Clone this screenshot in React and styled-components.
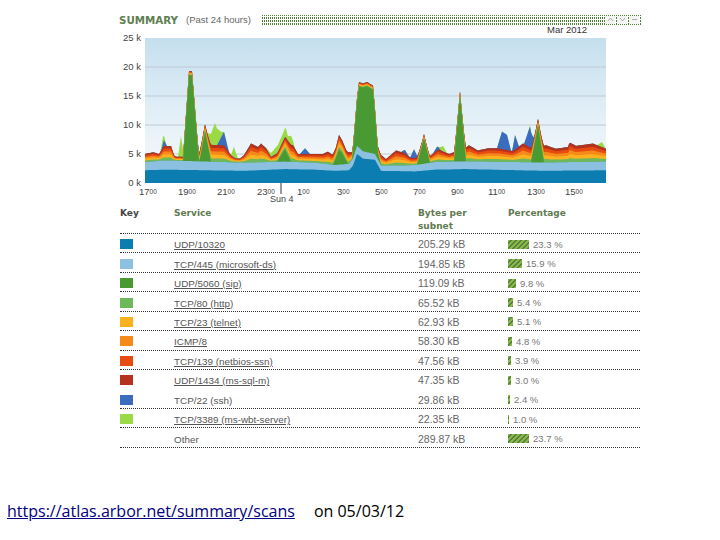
import styled, { createGlobalStyle } from 'styled-components';

const GlobalStyle = createGlobalStyle`
  html, body {
    margin: 0;
    padding: 0;
    background: #fff;
  }
`;

const Page = styled.div`
  width: 720px;
  height: 540px;
  overflow: hidden;
  display: flex;
  flex-direction: column;
  font-family: "Liberation Sans", Arial, sans-serif;
`;

const Report = styled.div`
  width: 523px;
  margin-left: 119px;
  padding-top: 14px;
`;

const TitleBar = styled.div`
  display: flex;
  align-items: center;
  height: 11px;
`;

const Title = styled.span`
  font-family: "DejaVu Sans", sans-serif;
  font-size: 10.3px;
  font-weight: 700;
  color: #5f8052;
  width: 67px;
`;

const Period = styled.span`
  font-size: 9.5px;
  color: #666;
  width: 76px;
`;

const Strip = styled.div`
  flex: 1;
  height: 10px;
  display: flex;
  justify-content: flex-end;
  background-image:
    repeating-linear-gradient(90deg, #4f8035 0 1px, #fff 1px 2px),
    repeating-linear-gradient(0deg, #4f8035 0 2px, #fff 2px 3px);
  background-blend-mode: lighten;
`;

const StripButtons = styled.div`
  display: flex;
  align-items: center;
  gap: 2px;
  padding-right: 3px;
`;

const StripButton = styled.div`
  width: 10px;
  height: 8px;
  background: #f4f5f2;
  display: flex;
  align-items: center;
  justify-content: center;
`;

const Chart = styled.svg`
  display: block;
  width: 523px;
  height: 184px;
  margin-top: -3px;
`;

const Table = styled.div`
  margin-top: 1px;
  margin-left: 1px;
  width: 520px;
`;

const Row = styled.div`
  box-sizing: border-box;
  display: grid;
  grid-template-columns: 54px 244px 90px 1fr;
  align-items: center;
  height: ${(p) => (p.$head ? '27px' : '19.45px')};
  padding-top: ${(p) => (p.$head ? '0' : '2px')};
  border-bottom: 1px dotted ${(p) => (p.$noLine ? 'transparent' : '#333')};
  font-size: 10.5px;
  color: #666;
`;

const HeadCell = styled.div`
  align-self: start;
  font-family: "DejaVu Sans", sans-serif;
  font-size: 9px;
  font-weight: 700;
  line-height: 13px;
  color: ${(p) => (p.$dark ? '#444' : '#5f7a50')};
`;

const Swatch = styled.div`
  width: 13px;
  height: 10px;
  background: ${(p) => p.$color};
`;

const ServiceLink = styled.span`
  font-size: 9.9px;
  color: #555;
  text-decoration: ${(p) => (p.$plain ? 'none' : 'underline')};
`;

const Percent = styled.div`
  display: flex;
  align-items: center;
  gap: 4px;
  font-size: 9.5px;
  color: #777;
`;

const Bar = styled.div`
  height: 9px;
  background: repeating-linear-gradient(135deg, #8ab54a 0 2px, #55803a 2px 3.5px);
`;

const Footer = styled.div`
  margin-top: 53px;
  margin-left: 7px;
  display: flex;
  gap: 19px;
  font-family: "Open Sans", sans-serif;
  font-size: 16px;
  line-height: 20px;
`;

const FooterLink = styled.a`
  color: #000080;
  text-decoration: underline;
`;

const FooterDate = styled.span`
  color: #000;
`;

const PLOT_X = 26;
const PLOT_Y = 16;
const PLOT_W = 461;
const PLOT_H = 145;
const K = PLOT_H / 25;

// piecewise linear lookup through [x, value] knots
const lerp = (knots, x) => {
  if (x <= knots[0][0]) return knots[0][1];
  for (let i = 1; i < knots.length; i++) {
    if (x <= knots[i][0]) {
      const [x0, y0] = knots[i - 1];
      const [x1, y1] = knots[i];
      return y0 + ((y1 - y0) * (x - x0)) / (x1 - x0);
    }
  }
  return knots[knots.length - 1][1];
};

const blueKnots = [
  [0, 2.2], [20, 2.3], [60, 2.2], [100, 2.1], [140, 2.4], [170, 2.3], [190, 2.1], [204, 2.2],
  [208, 3], [212, 5], [218, 4.2], [230, 4], [236, 2.1], [270, 2], [290, 2.3], [320, 2.4],
  [400, 2.1], [461, 2.2],
];
const skyKnots = [
  [0, 1.4], [20, 1.6], [100, 1.4], [170, 1.2], [190, 1], [204, 1.1], [212, 1.4], [230, 1],
  [238, 0.9], [260, 1], [290, 1.3], [461, 1.5],
];
const greenKnots = [
  [0, 0], [38, 0], [44, 14.8], [47, 14.8], [54, 0], [54.5, 0], [60, 5.3], [66, 0],
  [132, 0], [140, 2.2], [146, 0], [188, 0], [194, 2.6], [197, 2], [203, 0], [207, 0],
  [214, 10.6], [222, 11.4], [228, 11], [233, 1.2], [236, 0], [272, 0], [279, 4.4], [285, 0],
  [309, 0], [315, 11.4], [321, 0], [386, 0], [393, 6.4], [399, 0], [461, 0],
];
const topKnots = [
  [0, 5], [8, 5.3], [14, 5], [19, 6.4], [26, 6.4], [29, 4.8], [36, 3.9], [53, 5], [64, 6.6],
  [79, 6.5], [86, 4.8], [93, 3.9], [99, 4.8], [106, 6.8], [113, 6.2], [116, 6.8], [121, 6],
  [126, 4.5], [134, 5.3], [141, 6.8], [148, 6.5], [153, 5], [178, 5], [183, 5.4], [187, 4.9],
  [191, 5.3], [194, 7], [201, 5.3], [233, 5.3], [241, 4.1], [251, 5.6], [259, 5.2], [266, 4.3],
  [284, 4.5], [293, 5.8], [304, 5], [319, 5.9], [324, 6.5], [333, 5.6], [343, 6], [353, 6],
  [368, 5.5], [378, 6.8], [388, 5.9], [401, 6.5], [411, 5.9], [423, 6.2], [424.5, 7], [431, 6.4],
  [448, 6.8], [461, 5.9],
];
const royalKnots = [
  [0, 0], [16, 0], [19, 1], [22, 0], [72, 0], [79, 2.3], [84, 0], [155, 0], [160, 1], [165, 0],
  [256, 0], [260, 0.6], [264, 0], [265, 0], [269, 1.5], [273, 0], [288, 0], [292, 0.6], [296, 0],
  [352, 0], [357, 3], [362, 2.6], [366, 0], [367, 0], [370, 2.5], [374, 0], [379, 0], [385, 3.6],
  [389, 0], [461, 0],
];
const limeKnots = [
  [0, 0], [15, 0], [18, 1.2], [21, 0], [33, 0], [36, 3.6], [39, 0], [62, 0], [70, 3.8], [76, 1], [79, 0],
  [86, 0], [89, 1.9], [93, 0], [120, 0], [131, 1.2], [138, 1.4], [141, 1.6], [143, 0.8], [146, 1.6], [150, 0],
  [293, 0], [298, 1], [302, 0], [452, 0], [457, 0.9], [461, 0],
];

const bandLayers = [
  { color: '#6db85a', share: 0.2 },
  { color: '#fdb11e', share: 0.22 },
  { color: '#f58a1b', share: 0.2 },
  { color: '#e64b10', share: 0.2 },
  { color: '#b5321f', share: 0.18 },
];

const samples = [];
for (let x = 0; x <= PLOT_W; x += 1) samples.push(x);

// cumulative top of every layer at each sample, bottom up
const buildLayers = () => {
  const layers = [
    { color: '#0b7db0', tops: [] },
    { color: '#8cc0e0', tops: [] },
    { color: '#4a9a33', tops: [] },
    ...bandLayers.map((b) => ({ color: b.color, tops: [] })),
    { color: '#3a6cc0', tops: [] },
    { color: '#9adb45', tops: [] },
  ];
  samples.forEach((x) => {
    const blue = lerp(blueKnots, x);
    const sky = lerp(skyKnots, x);
    const green = lerp(greenKnots, x);
    const floor = blue + sky;
    const base = Math.max(lerp(topKnots, x) - floor, 0.5);
    const squeeze = green > 0 ? 1 / (1 + green / 5) : 1;
    const band = Math.max(base * squeeze, 0.7);
    let y = blue;
    layers[0].tops.push(y);
    y += sky;
    layers[1].tops.push(y);
    y += green;
    layers[2].tops.push(y);
    bandLayers.forEach((b, i) => {
      y += band * b.share;
      layers[3 + i].tops.push(y);
    });
    y += lerp(royalKnots, x);
    layers[8].tops.push(y);
    y += lerp(limeKnots, x);
    layers[9].tops.push(y);
  });
  return layers;
};

const layers = buildLayers();
const py = (v) => PLOT_H - v * K;

// drawn top layer first so each lower layer covers it
const areaPath = (tops) =>
  `M0 ${PLOT_H} ` + tops.map((t, i) => `L${samples[i]} ${py(t).toFixed(1)}`).join(' ') + ` L${PLOT_W} ${PLOT_H} Z`;

const yLabels = [25, 20, 15, 10, 5, 0];
const xLabels = [
  ['17', 20], ['19', 59], ['21', 98], ['23', 138], ['1', 178], ['3', 218], ['5', 256],
  ['7', 294], ['9', 332], ['11', 369], ['13', 408], ['15', 446],
];

const rows = [
  { color: '#0b7db0', service: 'UDP/10320', bytes: '205.29 kB', pct: '23.3 %', bar: 21 },
  { color: '#8cc0e0', service: 'TCP/445 (microsoft-ds)', bytes: '194.85 kB', pct: '15.9 %', bar: 14 },
  { color: '#4a9a33', service: 'UDP/5060 (sip)', bytes: '119.09 kB', pct: '9.8 %', bar: 8 },
  { color: '#6db85a', service: 'TCP/80 (http)', bytes: '65.52 kB', pct: '5.4 %', bar: 5 },
  { color: '#fdb11e', service: 'TCP/23 (telnet)', bytes: '62.93 kB', pct: '5.1 %', bar: 5 },
  { color: '#f58a1b', service: 'ICMP/8', bytes: '58.30 kB', pct: '4.8 %', bar: 4 },
  { color: '#e64b10', service: 'TCP/139 (netbios-ssn)', bytes: '47.56 kB', pct: '3.9 %', bar: 3 },
  { color: '#b5321f', service: 'UDP/1434 (ms-sql-m)', bytes: '47.35 kB', pct: '3.0 %', bar: 3, noLine: true },
  { color: '#3a6cc0', service: 'TCP/22 (ssh)', bytes: '29.86 kB', pct: '2.4 %', bar: 2, plain: true },
  { color: '#9adb45', service: 'TCP/3389 (ms-wbt-server)', bytes: '22.35 kB', pct: '1.0 %', bar: 1 },
  { service: 'Other', bytes: '289.87 kB', pct: '23.7 %', bar: 21, plain: true },
];

const TrafficChart = () => (
  <Chart viewBox="0 0 523 184">
    <defs>
      <linearGradient id="sky" x1="0" y1="0" x2="0" y2="1">
        <stop offset="0" stopColor="#c5dfee" />
        <stop offset="0.6" stopColor="#e6f1f8" />
        <stop offset="1" stopColor="#f8fbfd" />
      </linearGradient>
    </defs>
    <text x={428} y={11} fontFamily="Liberation Sans" fontSize="9.5" fill="#333">Mar 2012</text>
    <g transform={`translate(${PLOT_X} ${PLOT_Y})`}>
      <rect width={PLOT_W} height={PLOT_H} fill="url(#sky)" />
      {[20, 15, 10, 5].map((v) => (
        <line key={v} x1="0" x2={PLOT_W} y1={py(v)} y2={py(v)} stroke="#bfc8d4" strokeWidth="1" />
      ))}
      {layers.slice().reverse().map((l) => (
        <path key={l.color} d={areaPath(l.tops)} fill={l.color} />
      ))}
      <rect x="135" y={PLOT_H} width="2" height="11" fill="#999" />
    </g>
    {yLabels.map((v) => (
      <text
        key={v}
        x={22}
        y={PLOT_Y + py(v) + 3}
        textAnchor="end"
        fontFamily="Liberation Sans"
        fontSize="9.5"
        fill="#444"
      >
        {v} k
      </text>
    ))}
    {xLabels.map(([h, x]) => (
      <text key={x} x={x} y={173} fontFamily="Liberation Sans" fontSize="9.5" fill="#444">
        {h}
        <tspan fontSize="6.5" dy="-1">00</tspan>
      </text>
    ))}
    <text x={151} y={180} fontFamily="Liberation Sans" fontSize="9" fill="#444">Sun 4</text>
  </Chart>
);

const ChevronUp = () => (
  <svg width="7" height="5" viewBox="0 0 7 5"><path d="M1 4 L3.5 1 L6 4" fill="none" stroke="#aaa" /></svg>
);
const ChevronDown = () => (
  <svg width="7" height="5" viewBox="0 0 7 5"><path d="M1 1 L3.5 4 L6 1" fill="none" stroke="#aaa" /></svg>
);
const Minus = () => (
  <svg width="7" height="5" viewBox="0 0 7 5"><path d="M1 2.5 H6" fill="none" stroke="#aaa" /></svg>
);

const App = () => (
  <Page>
    <GlobalStyle />
    <Report>
      <TitleBar>
        <Title>SUMMARY</Title>
        <Period>(Past 24 hours)</Period>
        <Strip>
          <StripButtons>
            <StripButton><ChevronUp /></StripButton>
            <StripButton><ChevronDown /></StripButton>
            <StripButton><Minus /></StripButton>
          </StripButtons>
        </Strip>
      </TitleBar>
      <TrafficChart />
      <Table>
        <Row $head>
          <HeadCell $dark>Key</HeadCell>
          <HeadCell>Service</HeadCell>
          <HeadCell>Bytes per<br />subnet</HeadCell>
          <HeadCell>Percentage</HeadCell>
        </Row>
        {rows.map((r) => (
          <Row key={r.service} $noLine={r.noLine}>
            <div>{r.color && <Swatch $color={r.color} />}</div>
            <div><ServiceLink $plain={r.plain}>{r.service}</ServiceLink></div>
            <div>{r.bytes}</div>
            <Percent>
              <Bar style={{ width: r.bar }} />
              <span>{r.pct}</span>
            </Percent>
          </Row>
        ))}
      </Table>
    </Report>
    <Footer>
      <FooterLink href="#">https://atlas.arbor.net/summary/scans</FooterLink>
      <FooterDate>on 05/03/12</FooterDate>
    </Footer>
  </Page>
);

export default App;
